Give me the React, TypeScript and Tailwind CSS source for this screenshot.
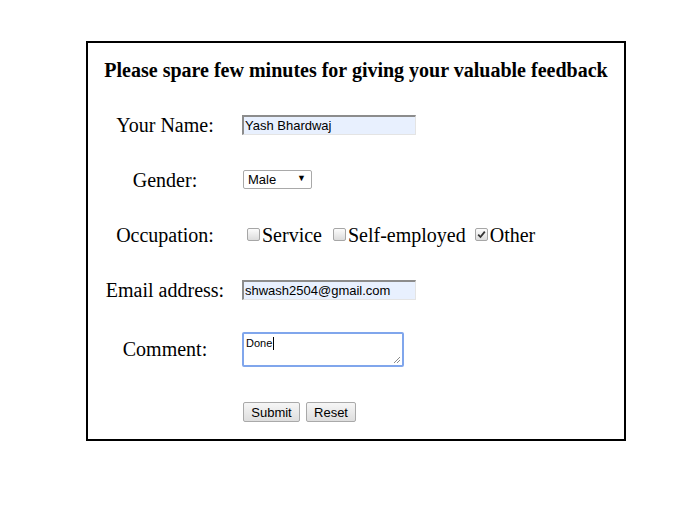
import { useState } from "react";

const serif = { fontFamily: '"Liberation Serif", "Times New Roman", serif' };
const sans = { fontFamily: '"Liberation Sans", Arial, sans-serif' };

type Occupation = "Service" | "Self-employed" | "Other";

// old-style grey checkbox
function CheckBox({ checked, onClick }: { checked: boolean; onClick: () => void }) {
  return (
    <span
      onClick={onClick}
      className="ml-[5px] mr-[2px] flex h-[13px] w-[13px] shrink-0 items-center justify-center rounded-[2px] border border-[#a6a6a6] bg-gradient-to-b from-[#fcfcfc] to-[#dcdcdc]"
    >
      {checked && (
        <svg width="9" height="9" viewBox="0 0 9 9">
          <path d="M1.2 4.6 L3.5 7 L7.8 1.6" fill="none" stroke="#333" strokeWidth="1.8" />
        </svg>
      )}
    </span>
  );
}

export default function App() {
  const [name, setName] = useState("Yash Bhardwaj");
  const [email, setEmail] = useState("shwash2504@gmail.com");
  const [occupation, setOccupation] = useState<Set<Occupation>>(new Set(["Other"]));

  const toggle = (o: Occupation) => {
    const next = new Set(occupation);
    next.has(o) ? next.delete(o) : next.add(o);
    setOccupation(next);
  };

  const inputCls =
    "h-[20px] w-[174px] border-t-2 border-l-2 border-r border-b border-t-[#8c8c8c] border-l-[#8c8c8c] border-r-[#e4e4e4] border-b-[#e4e4e4] bg-[#e8f0fe] px-[1px] text-[13px] text-black outline-none";

  return (
    <div className="min-h-[527px] bg-white pt-[41px] text-black">
      <div className="ml-[86px] h-[400px] w-[540px] border-2 border-black" style={serif}>
        {/* Heading */}
        <div className="flex h-[54px] items-center justify-center text-[20px] font-bold">
          Please spare few minutes for giving your valuable feedback
        </div>

        {/* Name */}
        <div className="flex h-[55px] items-center">
          <div className="w-[154px] text-center text-[20px]">Your Name:</div>
          <input
            value={name}
            onChange={(e) => setName(e.target.value)}
            className={inputCls}
            style={sans}
          />
        </div>

        {/* Gender */}
        <div className="flex h-[55px] items-center">
          <div className="w-[154px] text-center text-[20px]">Gender:</div>
          <div
            className="relative ml-[1px] flex h-[19px] w-[69px] items-center rounded-[2px] border border-[#a9a9a9] bg-white pl-[4px] text-[13px]"
            style={sans}
          >
            Male
            <span className="absolute right-[5px] top-[1px] text-[9px]">▼</span>
          </div>
        </div>

        {/* Occupation */}
        <div className="flex h-[55px] items-center">
          <div className="w-[154px] text-center text-[20px]">Occupation:</div>
          <div className="flex items-center text-[20px]">
            <CheckBox checked={occupation.has("Service")} onClick={() => toggle("Service")} />
            <span>Service</span>
            <span className="ml-[6px]" />
            <CheckBox checked={occupation.has("Self-employed")} onClick={() => toggle("Self-employed")} />
            <span>Self-employed</span>
            <span className="ml-[4px]" />
            <CheckBox checked={occupation.has("Other")} onClick={() => toggle("Other")} />
            <span>Other</span>
          </div>
        </div>

        {/* Email */}
        <div className="flex h-[55px] items-center">
          <div className="w-[154px] text-center text-[20px]">Email address:</div>
          <input
            value={email}
            onChange={(e) => setEmail(e.target.value)}
            className={inputCls}
            style={sans}
          />
        </div>

        {/* Comment */}
        <div className="flex h-[64px] items-center">
          <div className="w-[154px] text-center text-[20px]">Comment:</div>
          <div className="relative h-[35px] w-[162px] rounded-[2px] border-2 border-[#80a6ec] bg-white">
            <div className="flex items-center pl-[2px] pt-[3px] text-[11px] leading-[13px]" style={sans}>
              Done
              <span className="ml-[1px] inline-block h-[13px] w-[1px] bg-black" />
            </div>
            <svg className="absolute bottom-[1px] right-[1px]" width="8" height="8" viewBox="0 0 8 8">
              <path d="M7 1 L1 7 M7 4 L4 7" stroke="#8a8a8a" strokeWidth="1" />
            </svg>
          </div>
        </div>

        {/* Buttons */}
        <div className="flex h-[58px] items-start pl-[155px] pt-[21px]" style={sans}>
          <button className="h-[20px] w-[57px] rounded-[2px] border border-[#a9a9a9] bg-gradient-to-b from-[#f6f6f6] to-[#dedede] text-[13px]">
            Submit
          </button>
          <button className="ml-[6px] h-[20px] w-[50px] rounded-[2px] border border-[#a9a9a9] bg-gradient-to-b from-[#f6f6f6] to-[#dedede] text-[13px]">
            Reset
          </button>
        </div>
      </div>
    </div>
  );
}
